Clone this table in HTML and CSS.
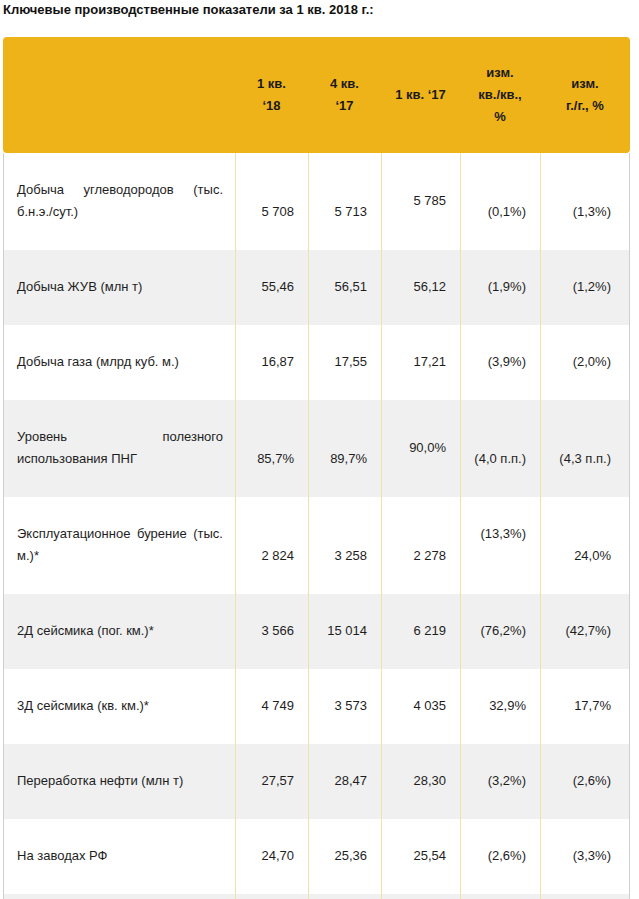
FILE: index.html
```html
<!DOCTYPE html>
<html lang="ru">
<head>
<meta charset="utf-8">
<title>Ключевые производственные показатели</title>
<link rel="stylesheet" href="styles.css">
</head>
<body>
<div class="page">
  <h1 class="title">Ключевые производственные показатели за 1 кв. 2018 г.:</h1>
  <table class="kpi">
    <colgroup>
      <col class="c-name">
      <col class="c-num">
      <col class="c-num">
      <col class="c-num3">
      <col class="c-chg">
      <col class="c-chg2">
    </colgroup>
    <thead>
      <tr>
        <th class="h-first"></th>
        <th>1 кв.<br>‘18</th>
        <th>4 кв.<br>‘17</th>
        <th>1 кв. ‘17</th>
        <th>изм.<br>кв./кв.,<br>%</th>
        <th class="h-last">изм.<br>г./г., %</th>
      </tr>
    </thead>
    <tbody>
      <tr>
        <td class="name">Добыча углеводородов (тыс. б.н.э./сут.)</td>
        <td>5 708</td><td>5 713</td><td class="mid">5 785</td><td>(0,1%)</td><td class="last">(1,3%)</td>
      </tr>
      <tr class="alt">
        <td class="name">Добыча ЖУВ (млн т)</td>
        <td>55,46</td><td>56,51</td><td class="mid">56,12</td><td>(1,9%)</td><td class="last">(1,2%)</td>
      </tr>
      <tr>
        <td class="name">Добыча газа (млрд куб. м.)</td>
        <td>16,87</td><td>17,55</td><td class="mid">17,21</td><td>(3,9%)</td><td class="last">(2,0%)</td>
      </tr>
      <tr class="alt">
        <td class="name">Уровень полезного использования ПНГ</td>
        <td>85,7%</td><td>89,7%</td><td class="mid">90,0%</td><td>(4,0 п.п.)</td><td class="last">(4,3 п.п.)</td>
      </tr>
      <tr>
        <td class="name">Эксплуатационное бурение (тыс. м.)*</td>
        <td>2 824</td><td>3 258</td><td>2 278</td><td class="top">(13,3%)</td><td class="last">24,0%</td>
      </tr>
      <tr class="alt">
        <td class="name">2Д сейсмика (пог. км.)*</td>
        <td>3 566</td><td>15 014</td><td class="mid">6 219</td><td>(76,2%)</td><td class="last">(42,7%)</td>
      </tr>
      <tr>
        <td class="name">3Д сейсмика (кв. км.)*</td>
        <td>4 749</td><td>3 573</td><td class="mid">4 035</td><td>32,9%</td><td class="last">17,7%</td>
      </tr>
      <tr class="alt">
        <td class="name">Переработка нефти (млн т)</td>
        <td>27,57</td><td>28,47</td><td class="mid">28,30</td><td>(3,2%)</td><td class="last">(2,6%)</td>
      </tr>
      <tr>
        <td class="name">На заводах РФ</td>
        <td>24,70</td><td>25,36</td><td class="mid">25,54</td><td>(2,6%)</td><td class="last">(3,3%)</td>
      </tr>
      <tr class="alt empty">
        <td class="name"></td>
        <td></td><td></td><td class="mid"></td><td></td><td class="last"></td>
      </tr>
    </tbody>
  </table>
</div>
</body>
</html>
```

FILE: styles.css
```css
html, body {
  margin: 0;
  padding: 0;
  background: #ffffff;
}

.page {
  padding: 0 0 0 3px;
  font-family: "Liberation Sans", Arial, sans-serif;
  color: #1e1e1e;
}

.title {
  margin: 0 0 17px 0;
  font-size: 13px;
  line-height: 20px;
  font-weight: bold;
  color: #111111;
}

.kpi {
  width: 627px;
  table-layout: fixed;
  border-collapse: separate;
  border-spacing: 0;
  font-size: 13px;
}

.c-name { width: 232px; }
.c-num { width: 73px; }
.c-num3 { width: 79px; }
.c-chg { width: 80px; }
.c-chg2 { width: 90px; }

.kpi th {
  height: 116px;
  padding: 0 4px;
  background: #efb31a;
  font-family: "Liberation Sans Narrow", "Liberation Sans", Arial, sans-serif;
  font-weight: bold;
  font-size: 13px;
  line-height: 22px;
  color: #1a1a1a;
  text-align: center;
  vertical-align: middle;
}

.kpi th.h-first {
  border-radius: 4px 0 0 4px;
}

.kpi th.h-last {
  border-radius: 0 4px 4px 0;
}

.kpi td {
  padding: 26px 14px 27px 4px;
  line-height: 22px;
  text-align: right;
  vertical-align: bottom;
  border-left: 1px solid #eee3a6;
}

.kpi td.name {
  padding: 26px 12px 27px 13px;
  text-align: justify;
  vertical-align: middle;
  border-left: 1px solid #cfcfcf;
}

.kpi td.mid {
  vertical-align: middle;
}

.kpi td.top {
  vertical-align: top;
}

.kpi td.last {
  padding-right: 18px;
  border-right: 1px solid #cfcfcf;
}

.kpi tr.alt td {
  background: #f0f0f0;
}

.kpi tr.empty td {
  height: 22px;
}
```
